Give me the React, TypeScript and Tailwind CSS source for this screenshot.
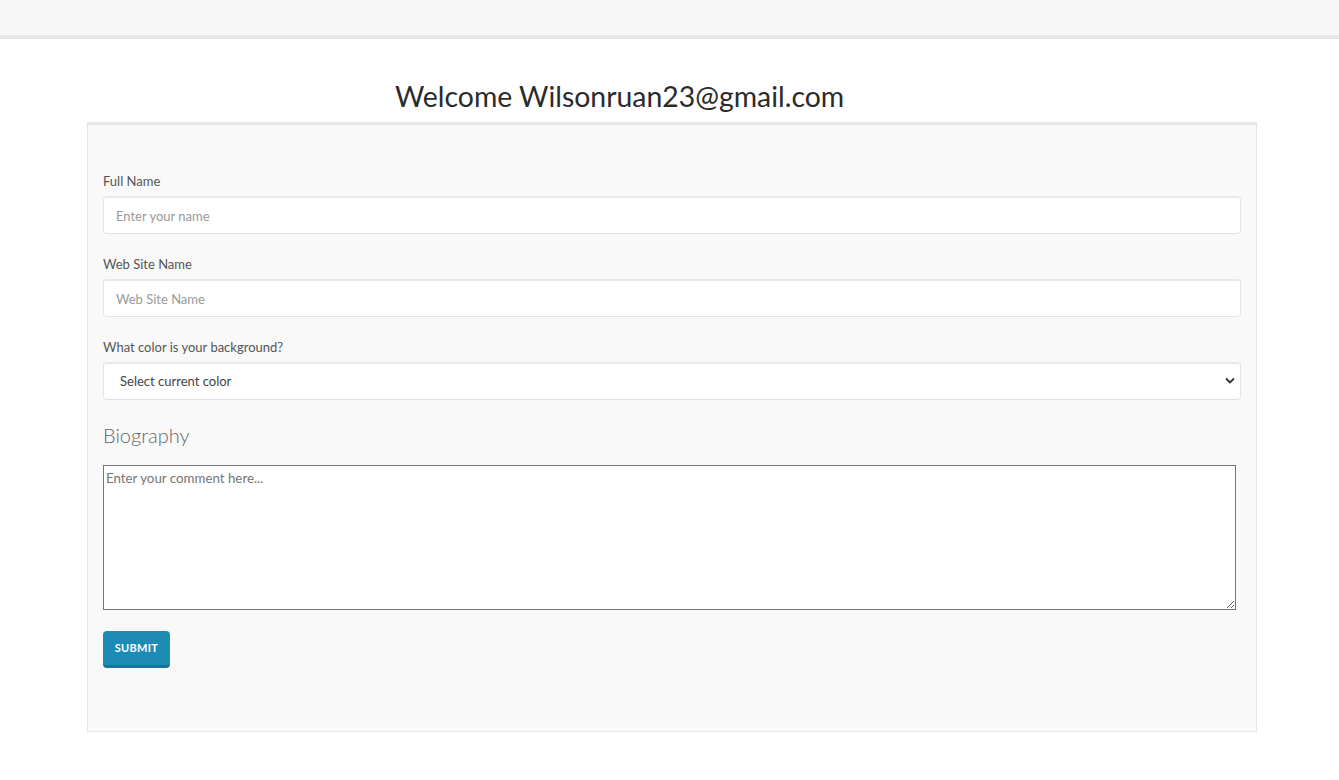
import { useState } from 'react'

const font = { fontFamily: 'Lato, "Open Sans", sans-serif' }

function Field({ label, placeholder }: { label: string; placeholder: string }) {
  return (
    <div className="mb-[21px]">
      <label className="block text-[13px] leading-[18px] text-[#555] mb-[6px]">{label}</label>
      <input
        type="text"
        placeholder={placeholder}
        className="block w-full h-[38px] px-[12px] text-[13px] text-[#333] bg-white rounded-[4px] border border-[#e3e3e3] border-t-2 border-t-[#e8e8e8] placeholder:text-[#999] outline-none"
      />
    </div>
  )
}

export default function App() {
  const [color, setColor] = useState('')

  return (
    <div className="min-h-[780px] bg-white" style={font}>
      <div className="h-[39px] bg-[#f7f7f7] border-b-4 border-[#e6e6e6]" />

      <h1 className="pl-[395px] pt-[39px] text-[28.4px] leading-[36px] text-[#2b2b2b] font-normal">
        Welcome Wilsonruan23@gmail.com
      </h1>

      <div className="ml-[87px] mt-[8px] w-[1170px] h-[610px] bg-[#f9f9f9] border border-[#e6e6e6] border-t-[3px] px-[15px] pt-[47px]">
        <form onSubmit={(e) => e.preventDefault()}>
          <Field label="Full Name" placeholder="Enter your name" />
          <Field label="Web Site Name" placeholder="Web Site Name" />

          <div className="mb-[22px]">
            <label className="block text-[13px] leading-[18px] text-[#555] mb-[6px]">
              What color is your background?
            </label>
            <div className="relative">
              <select
                value={color}
                onChange={(e) => setColor(e.target.value)}
                className="block w-full h-[38px] pl-[16px] pr-[30px] text-[13px] text-[#444] bg-white rounded-[4px] border border-[#e3e3e3] border-t-2 border-t-[#e8e8e8] appearance-none outline-none"
              >
                <option value="">Select current color</option>
                <option value="white">White</option>
                <option value="black">Black</option>
                <option value="gray">Gray</option>
              </select>
              <svg
                className="absolute right-[6px] top-[15px] pointer-events-none"
                width="10"
                height="7"
                viewBox="0 0 10 7"
                fill="none"
              >
                <path d="M1 1.5 L5 5.5 L9 1.5" stroke="#333" strokeWidth="1.8" />
              </svg>
            </div>
          </div>

          <h3 className="text-[20px] leading-[26px] font-light text-[#666] mb-[17px]">Biography</h3>

          <textarea
            placeholder="Enter your comment here..."
            className="block w-[1133px] h-[145px] px-[2px] pt-[3px] text-[13.3px] text-[#333] bg-white border border-[#767676] placeholder:text-[#757575] outline-none"
          />

          <button
            type="submit"
            className="mt-[21px] w-[67px] h-[37px] rounded-[4px] bg-[#1c8bb6] border-b-[3px] border-[#167399] text-white text-[11px] font-bold tracking-[0.3px]"
          >
            SUBMIT
          </button>
        </form>
      </div>
    </div>
  )
}
